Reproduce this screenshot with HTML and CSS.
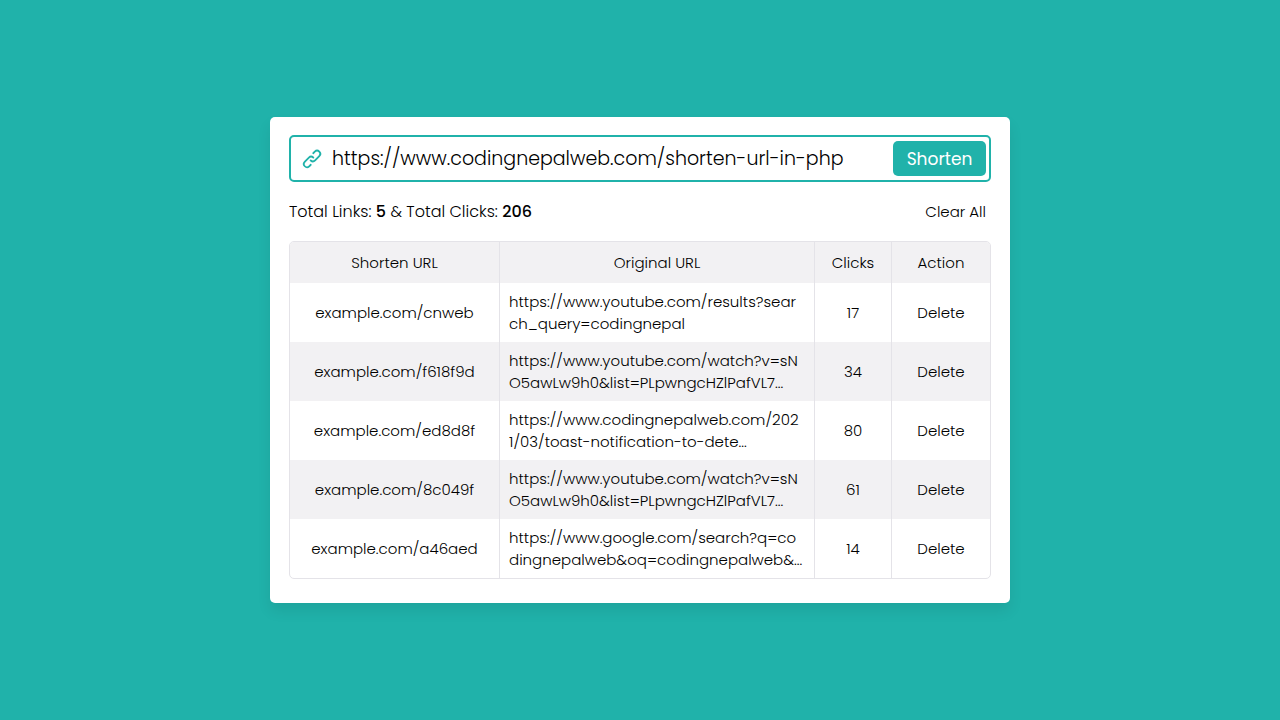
FILE: index.html
```html
<!DOCTYPE html>
<html lang="en">
<head>
<meta charset="utf-8">
<meta name="viewport" content="width=device-width, initial-scale=1">
<title>URL Shortener</title>
<link rel="stylesheet" href="styles.css">
</head>
<body>
<main class="card">
  <form class="shortener">
    <svg class="link-icon" viewBox="0 0 24 24" aria-hidden="true">
      <path d="M10,17.55,8.23,19.27a2.47,2.47,0,0,1-3.5-3.5l4.54-4.55a2.46,2.46,0,0,1,3.39-.09l.12.1a1,1,0,0,0,1.4-1.43A2.75,2.75,0,0,0,14,9.59a4.46,4.46,0,0,0-6.09.22L3.31,14.36a4.48,4.48,0,0,0,6.33,6.33L11.37,19A1,1,0,0,0,10,17.55ZM20.69,3.31a4.49,4.49,0,0,0-6.33,0L12.63,5A1,1,0,0,0,14,6.45l1.73-1.72a2.47,2.47,0,0,1,3.5,3.5l-4.54,4.55a2.46,2.46,0,0,1-3.39.09l-.12-.1a1,1,0,0,0-1.4,1.43,2.75,2.75,0,0,0,.23.21,4.47,4.47,0,0,0,6.09-.22l4.55-4.55A4.49,4.49,0,0,0,20.69,3.31Z"/>
    </svg>
    <input class="url-input" type="text" aria-label="URL to shorten" value="https://www.codingnepalweb.com/shorten-url-in-php">
    <button class="shorten-button" type="button">Shorten</button>
  </form>
  <div class="summary">
    <span class="totals">Total Links: <b>5</b> &amp; Total Clicks: <b>206</b></span>
    <a class="clear" href="#">Clear All</a>
  </div>
  <table class="urls">
    <colgroup><col class="col-short"><col class="col-original"><col class="col-clicks"><col class="col-action"></colgroup>
    <thead>
      <tr><th>Shorten URL</th><th>Original URL</th><th>Clicks</th><th>Action</th></tr>
    </thead>
    <tbody>
      <tr><td><a href="#">example.com/cnweb</a></td><td class="original">https://www.youtube.com/results?sear<br>ch_query=codingnepal</td><td>17</td><td><a href="#">Delete</a></td></tr>
      <tr><td><a href="#">example.com/f618f9d</a></td><td class="original">https://www.youtube.com/watch?v=sN<br>O5awLw9h0&amp;list=PLpwngcHZlPafVL7...</td><td>34</td><td><a href="#">Delete</a></td></tr>
      <tr><td><a href="#">example.com/ed8d8f</a></td><td class="original">https://www.codingnepalweb.com/202<br>1/03/toast-notification-to-dete...</td><td>80</td><td><a href="#">Delete</a></td></tr>
      <tr><td><a href="#">example.com/8c049f</a></td><td class="original">https://www.youtube.com/watch?v=sN<br>O5awLw9h0&amp;list=PLpwngcHZlPafVL7...</td><td>61</td><td><a href="#">Delete</a></td></tr>
      <tr><td><a href="#">example.com/a46aed</a></td><td class="original">https://www.google.com/search?q=co<br>dingnepalweb&amp;oq=codingnepalweb&amp;...</td><td>14</td><td><a href="#">Delete</a></td></tr>
    </tbody>
  </table>
</main>
</body>
</html>
```
FILE: styles.css
```css
* {
  box-sizing: border-box;
}

body {
  margin: 0;
  min-height: 100vh;
  padding: 16px;
  display: flex;
  align-items: center;
  justify-content: center;
  background: #20b2aa;
  color: #000;
  font-family: Poppins, Inter, "Open Sans", sans-serif;
  font-size: 15px;
  font-weight: 300;
  line-height: 22px;
}

a {
  color: inherit;
  text-decoration: none;
}

.card {
  width: 100%;
  max-width: 740px;
  padding: 18px 19px 24px;
  background: #fff;
  border-radius: 5px;
  box-shadow: 0 8px 14px rgba(0, 0, 0, 0.08);
}

.shortener {
  display: flex;
  align-items: center;
  height: 47px;
  padding: 0 3px 0 10px;
  border: 2px solid #20b2aa;
  border-radius: 5px;
}

.link-icon {
  flex: none;
  width: 22px;
  height: 22px;
  fill: #20b2aa;
}

.url-input {
  flex: 1;
  min-width: 0;
  height: 100%;
  padding: 0 9px;
  border: 0;
  outline: 0;
  background: transparent;
  color: inherit;
  font-family: inherit;
  font-size: 19px;
  font-weight: 300;
}

.shorten-button {
  width: 93px;
  height: 35px;
  padding: 0;
  border: 0;
  border-radius: 5px;
  background: #20b2aa;
  color: #fff;
  font-family: inherit;
  font-size: 17px;
  cursor: pointer;
}

.summary {
  display: flex;
  align-items: center;
  justify-content: space-between;
  padding: 19px 5px 18px 0;
}

.totals {
  font-size: 16px;
}

.summary b {
  font-weight: 500;
}

.urls {
  width: 100%;
  table-layout: fixed;
  border: 1px solid #e4e3e8;
  border-radius: 5px;
  border-spacing: 0;
  overflow: hidden;
}

.col-short {
  width: 30%;
}

.col-original {
  width: 45%;
}

.col-clicks {
  width: 11%;
}

.col-action {
  width: 14%;
}

.urls th,
.urls td {
  padding: 7px 4px;
  border-right: 1px solid #e4e3e8;
  text-align: center;
  font-weight: inherit;
}

.urls th {
  height: 41px;
}

.urls td {
  height: 59px;
}

.urls th:last-child,
.urls td:last-child {
  border-right: 0;
}

.urls thead,
.urls tbody tr:nth-child(even) {
  background: #f2f1f3;
}

.urls .original {
  padding: 7px 9px;
  text-align: left;
  white-space: nowrap;
}
```
